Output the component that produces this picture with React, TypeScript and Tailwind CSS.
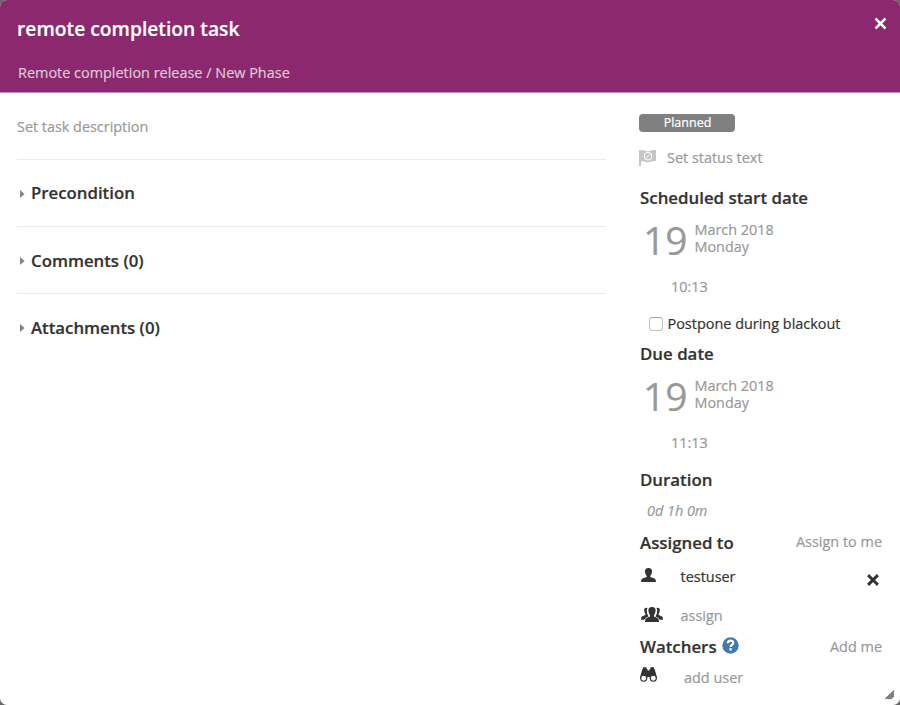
import React from "react";

function Section({ title, className = "mt-px" }: { title: string; className?: string }) {
  return (
    <div className="flex h-[67px] items-center border-t border-[#ebebeb] pl-[3px]">
      <svg className="mt-[2px] h-[8px] w-[5px]" viewBox="0 0 5 8"><path d="M0 0L4.6 4L0 8Z" fill="#858585" /></svg>
      <h2 className={"ml-[6px] text-[16.8px] leading-6 font-semibold text-[#333] " + className}>{title}</h2>
    </div>
  );
}

function DateBlock() {
  return (
    <div className="mt-[10px] flex h-[42px] items-start pl-[4px] text-[#999]">
      <span className="w-[51.5px] text-[39px] leading-[39px]">19</span>
      <div className="mt-px text-[14.4px] leading-[17px]"><div>March 2018</div><div>Monday</div></div>
    </div>
  );
}

function Heading({ children, className }: { children: React.ReactNode; className: string }) {
  return <div className={"flex h-6 items-center justify-between pl-px text-[16.85px] font-semibold text-[#333] " + className}>{children}</div>;
}

function Cross({ className }: { className: string }) {
  return (
    <svg className={className} viewBox="0 0 12 12" stroke="currentColor" strokeLinecap="square">
      <path d="M2.2 2.2L9.8 9.8M9.8 2.2L2.2 9.8" />
    </svg>
  );
}

export default function App() {
  return (
    <div className="h-[705px] w-[900px] overflow-hidden bg-[#666] font-['Open_Sans',sans-serif] text-[14.45px] [-webkit-text-stroke:0.2px]">
      <div className="relative h-full overflow-hidden rounded-[7px] bg-white">
        <header className="flex h-[93px] justify-between border-b border-[#c48fb4] bg-[#8c286e] pr-[13px] pl-[17px]">
          <div>
            <h1 className="mt-[17px] text-[19.25px] leading-6 font-semibold text-white">remote completion task</h1>
            <p className="mt-5 pl-px leading-6 text-[#dccbd8]">Remote completion release / New Phase</p>
          </div>
          <Cross className="mt-[17px] h-[13px] w-[13px] stroke-[2.3] text-white" />
        </header>
        <div className="flex pl-[17px]">
          <main className="w-[589px]">
            <p className="flex h-[66px] items-center pt-[2px] text-[14.4px] text-[#999]">Set task description</p>
            <Section title="Precondition" className="mt-0" />
            <Section title="Comments (0)" />
            <Section title="Attachments (0)" />
          </main>
          <aside className="ml-[33px] w-[243px] pt-[21px] text-[#999]">
            <div className="flex h-[18px] w-[96px] items-center justify-center rounded-[4px] bg-[#808080] pl-px text-[12.5px] text-white">Planned</div>
            <div className="mt-[14px] flex h-6 items-center">
              <svg className="mt-[-2px] h-[17px] w-[17px]" viewBox="0 0 17 17">
                <path d="M0 1H2V17H0ZM2 1.5C6 .2 7 3.5 11 2Q14 .5 17 1V12Q14 11.5 11 13C7 14.5 6 11.5 2 12.5Z" fill="#c5c5c5" />
                <circle cx="9" cy="7.2" r="3.9" fill="none" stroke="white" />
                <path d="M6.5 9.5L11.6 4.8" stroke="white" />
              </svg>
              <span className="ml-[11px]">Set status text</span>
            </div>
            <Heading className="mt-4">Scheduled start date</Heading>
            <DateBlock />
            <div className="mt-[13px] h-6 pl-8 leading-6">10:13</div>
            <div className="mt-[13px] flex h-6 items-center pl-[10px] text-[#333]">
              <span className="mr-[4.5px] h-[14px] w-[14px] rounded-[3px] border border-[#c4c4c4] border-t-[#aaa] bg-white" />
              Postpone during blackout
            </div>
            <Heading className="mt-[6px]">Due date</Heading>
            <DateBlock />
            <div className="mt-[13px] h-6 pl-8 leading-6">11:13</div>
            <Heading className="mt-[13px]">Duration</Heading>
            <div className="mt-[7px] h-6 pl-2 text-[14.4px] leading-6 italic">0d 1h 0m</div>
            <Heading className="mt-[7px]"><span className="pt-px">Assigned to</span><span className="text-[14.45px] font-normal text-[#999]">Assign to me</span></Heading>
            <div className="mt-[11px] flex h-6 items-center pl-[2px] text-[#333]">
              <svg className="mt-[-4px] h-[14px] w-[15px]" viewBox="0 0 14 14" preserveAspectRatio="none" fill="#333"><path d="M7 0C9.5 0 10.7 1.7 10.3 4.2C10 6.3 9 7 8.7 8V9L12.7 10.5Q14 11 14 14H0Q0 11 1.3 10.5L5.3 9V8C5 7 4 6.3 3.7 4.2C3.3 1.7 4.5 0 7 0Z" /></svg>
              <span className="ml-[24.5px]">testuser</span>
              <Cross className="mt-[6px] mr-[3px] ml-auto h-[12px] w-[12px] stroke-[3] text-[#333]" />
            </div>
            <div className="mt-[15px] flex h-6 items-center pl-[2px]">
              <svg className="mt-[-3px] h-[15px] w-[22px]" viewBox="0 0 22 15" fill="#333">
                <path d="M6.5 1C3.5 .3 2.8 2.2 3.3 4.2C3.7 6 4.5 6.5 4.3 8L.9 9.6Q0 10.2 0 12.7H3.4Q3.7 10.8 7.5 9.4Q6.6 7.8 6 6Q5.3 3 6.5 1ZM15.5 1C18.5 .3 19.2 2.2 18.7 4.2C18.3 6 17.5 6.5 17.7 8L21.1 9.6Q22 10.2 22 12.7H18.6Q18.3 10.8 14.5 9.4Q15.4 7.8 16 6Q16.7 3 15.5 1Z" />
                <path d="M11 0C14 0 15 1.8 14.5 4.4C14.1 6.5 13.2 7.5 12.9 8.7V9.6L16.5 11.1Q18 11.8 18 15H4Q4 11.8 5.5 11.1L9.1 9.6V8.7C8.8 7.5 7.9 6.5 7.5 4.4C7 1.8 8 0 11 0Z" />
              </svg>
              <span className="ml-[17.5px]">assign</span>
            </div>
            <Heading className="mt-[7px]">
              <span className="flex items-center">Watchers
                <svg className="ml-[5px] mt-[-3px] h-[17px] w-[17px]" viewBox="0 0 17 17"><circle cx="8.5" cy="8.5" r="8.2" fill="#4479b8" /><path d="M5.8 6.2C6 2.7 11.3 2.8 11.2 6C11.1 8 8.6 8 8.6 10" fill="none" stroke="white" strokeWidth="2.2" /><rect x="7.4" y="11.2" width="2.4" height="2.3" fill="white" /></svg>
              </span>
              <span className="text-[14.45px] font-normal text-[#999]">Add me</span>
            </Heading>
            <div className="mt-[7px] flex h-6 items-center pl-px">
              <svg className="mt-[-7px] h-[15px] w-[17px]" viewBox="0 0 17 15">
                <path d="M2.4 2H3V.3H6.6V2H7.5V3.4H9.5V2H10.4V.3H14V2H14.6L17 10.5V12H9.8V10H7.2V12H0V10.5Z" fill="#333" />
                <circle cx="3.7" cy="11.2" r="3" fill="white" stroke="#333" strokeWidth="1.1" /><circle cx="13.3" cy="11.2" r="3" fill="white" stroke="#333" strokeWidth="1.1" />
              </svg>
              <span className="ml-[27px]">add user</span>
            </div>
          </aside>
        </div>
        <svg className="absolute right-[5px] bottom-[5px] h-[10px] w-[10px]" viewBox="0 0 10 10"><path d="M0 9L9 0V6L6 9Z" fill="#a8a8a8" /><path d="M.5 9L9 .8M3 9L9 3.3M5.5 9L9 5.8" stroke="#707070" strokeWidth="1.2" /></svg>
      </div>
    </div>
  );
}
